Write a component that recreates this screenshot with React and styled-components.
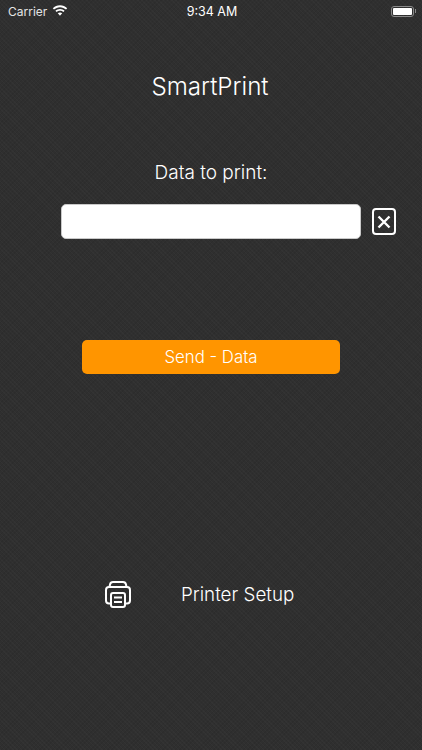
import React from 'react'
import styled, { createGlobalStyle } from 'styled-components'

const GlobalStyle = createGlobalStyle`
  html, body {
    margin: 0;
    padding: 0;
    background: #2f2f2f;
  }
  * {
    box-sizing: border-box;
  }
`

export default function App() {
  return (
    <Screen>
      <GlobalStyle />
      <StatusBar>
        <Carrier>
          Carrier
          <svg width="16" height="12" viewBox="0 0 16 12" fill="#fff">
            <path d="M8 2.200c2.300 0 4.400.9 6 2.400l1.200-1.300C13.300 1.400 10.800.3 8 .3S2.700 1.400.8 3.300L2 4.600c1.600-1.500 3.700-2.400 6-2.400z" />
            <path d="M8 5.700c1.300 0 2.500.5 3.400 1.300l1.200-1.300C11.400 4.600 9.800 3.900 8 3.900s-3.400.7-4.600 1.800L4.600 7c.9-.8 2.100-1.300 3.400-1.300z" />
            <path d="M8 7.500c-.9 0-1.600.3-2.200.8L8 10.700l2.200-2.400c-.6-.5-1.300-.8-2.200-.8z" />
          </svg>
        </Carrier>
        <Clock>9:34 AM</Clock>
        <Battery>
          <BatteryBody>
            <BatteryFill />
          </BatteryBody>
          <BatteryCap />
        </Battery>
      </StatusBar>

      <Title>SmartPrint</Title>
      <Prompt>Data to print:</Prompt>

      <InputRow>
        <DataInput type="text" />
        <ClearButton aria-label="Clear">
          <svg width="16" height="16" viewBox="0 0 16 16" fill="none" stroke="#fff" strokeWidth="2.400">
            <path d="M2.500 2.500l11 11M13.500 2.500l-11 11" />
          </svg>
        </ClearButton>
      </InputRow>

      <SendButton>Send - Data</SendButton>

      <SetupRow>
        <svg width="28" height="28" viewBox="0 0 28 28" fill="none" stroke="#fff" strokeWidth="2" strokeLinejoin="round">
          <path d="M5.500 7l.5-2.500C6.400 2.800 7.300 2 9 2h10c1.700 0 2.600.8 3 2.500l.5 2.500" />
          <path d="M7 23.500H5c-2 0-3-1.300-3-3V10c0-2 1.300-3 3-3h18c1.700 0 3 1 3 3v10.500c0 1.700-1 3-3 3h-2" />
          <rect x="7" y="13" width="14" height="14" rx="2" />
          <path d="M10 17.500h8M10 22h8" />
        </svg>
        <SetupLabel>Printer Setup</SetupLabel>
      </SetupRow>
    </Screen>
  )
}

const Screen = styled.div`
  width: 422px;
  height: 750px;
  overflow: hidden;
  display: flex;
  flex-direction: column;
  font-family: Inter, "Liberation Sans", sans-serif;
  color: #fff;
  background-color: #2f2f2f;
  background-image:
    repeating-linear-gradient(45deg, rgba(255, 255, 255, 0.018) 0 1px, transparent 1px 3px),
    repeating-linear-gradient(-45deg, rgba(0, 0, 0, 0.06) 0 1px, transparent 1px 3px);
`

const StatusBar = styled.div`
  height: 22px;
  padding: 0 6px 0 8px;
  display: grid;
  grid-template-columns: 1fr auto 1fr;
  align-items: center;
  font-size: 12px;
`

const Carrier = styled.div`
  display: flex;
  align-items: center;
  gap: 5px;
  color: #e4e4e4;
`

const Clock = styled.div`
  font-size: 12.500px;
  font-weight: 400;
`

const Battery = styled.div`
  justify-self: end;
  display: flex;
  align-items: center;
  gap: 1px;
`

const BatteryBody = styled.div`
  width: 23px;
  height: 11px;
  padding: 1px;
  border: 1px solid #8a8a8a;
  border-radius: 3px;
`

const BatteryFill = styled.div`
  height: 100%;
  background: #fff;
  border-radius: 1px;
`

const BatteryCap = styled.div`
  width: 1px;
  height: 4px;
  background: #8a8a8a;
`

const Title = styled.div`
  margin-top: 50px;
  padding-right: 2px;
  text-align: center;
  font-size: 24.200px;
  font-weight: 300;
  line-height: 30px;
`

const Prompt = styled.div`
  margin-top: 59px;
  text-align: center;
  font-size: 19px;
  font-weight: 300;
  line-height: 24px;
`

const InputRow = styled.div`
  margin-top: 19px;
  padding-left: 61px;
  display: flex;
  align-items: center;
  gap: 11px;
`

const DataInput = styled.input`
  width: 300px;
  height: 35px;
  padding: 0 8px;
  background: #fff;
  border: 1px solid #c9c9c9;
  border-radius: 5px;
  outline: none;
`

const ClearButton = styled.button`
  width: 24px;
  height: 27px;
  padding: 0;
  display: flex;
  align-items: center;
  justify-content: center;
  background: transparent;
  border: 2px solid #fff;
  border-radius: 4px;
`

const SendButton = styled.button`
  margin: 101px 0 0 82px;
  width: 258px;
  height: 34px;
  background: #ff9500;
  border: none;
  border-radius: 5px;
  color: #fff;
  font-family: inherit;
  font-size: 16.800px;
  font-weight: 300;
`

const SetupRow = styled.div`
  margin: 206px 0 0 104px;
  display: flex;
  align-items: center;
  gap: 49px;
`

const SetupLabel = styled.div`
  font-size: 18.800px;
  font-weight: 300;
`
